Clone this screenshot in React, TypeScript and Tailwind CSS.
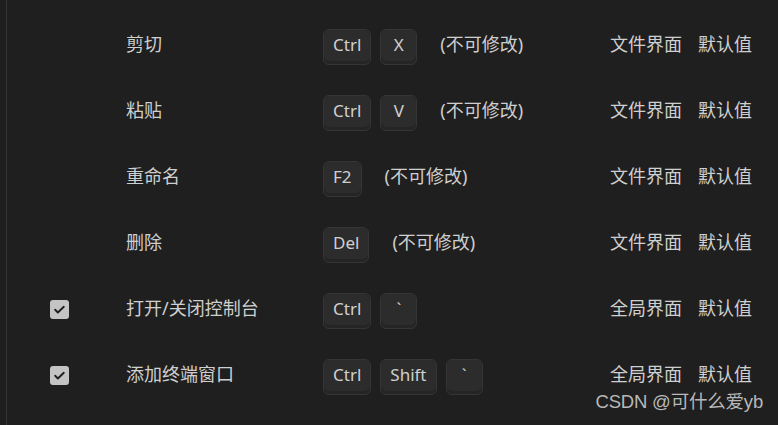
const rows = [
  { checked: false, label: "", keys: ["", ""], note: "", scope: "", value: "" },
  { checked: false, label: "剪切", keys: ["Ctrl", "X"], note: "(不可修改)", scope: "文件界面", value: "默认值" },
  { checked: false, label: "粘贴", keys: ["Ctrl", "V"], note: "(不可修改)", scope: "文件界面", value: "默认值" },
  { checked: false, label: "重命名", keys: ["F2"], note: "(不可修改)", scope: "文件界面", value: "默认值" },
  { checked: false, label: "删除", keys: ["Del"], note: "(不可修改)", scope: "文件界面", value: "默认值" },
  { checked: true, label: "打开/关闭控制台", keys: ["Ctrl", "`"], note: "", scope: "全局界面", value: "默认值" },
  { checked: true, label: "添加终端窗口", keys: ["Ctrl", "Shift", "`"], note: "", scope: "全局界面", value: "默认值" },
];

const Key = ({ k, w }: { k: string; w?: string }) => {
  return (
    <div className={`rounded-md border border-[#353535] bg-[#252525] pb-[3px] ${w ?? ""}`}>
      <div className="h-[31px] min-w-[35px] px-[9px] rounded-md bg-[#2c2c2c] flex items-center justify-center text-[17px] text-[#d0d0d0]">
        {k}
      </div>
    </div>
  );
};

const Check = () => (
  <div className="w-[19px] h-[19px] rounded-[3px] bg-[#c4c4c4] flex items-center justify-center">
    <svg width="13" height="13" viewBox="0 0 24 24" fill="none" stroke="#1f1f1f" strokeWidth="3.5" strokeLinecap="round" strokeLinejoin="round">
      <path d="M4 12.5l5 5L20 7" />
    </svg>
  </div>
);

export default function App() {
  return (
    <div
      className="relative w-[778px] h-[425px] overflow-hidden bg-[#1f1f1f] text-[#cfcfcf]"
      style={{ fontFamily: '"Noto Sans", "Noto Sans CJK SC", sans-serif' }}
    >
      <div className="ml-[6px] h-full border-l border-[#363636] flex flex-col">
        <div className="-mt-[54px]">
          {rows.map((r, i) => (
            <div key={i} className="h-[66px] flex items-center text-[18px]">
              <div className="w-[43px]" />
              <div className="w-[76px]">{r.checked && <Check />}</div>
              <div className="w-[197px] pb-[1px]">{r.label}</div>
              <div className="w-[287px] flex items-center">
                <div className="flex gap-[9px] pt-[3px]">
                  {r.keys.map((k, j) => (
                    <Key key={j} k={k} w={k === "" ? (j === 0 ? "w-[50px]" : "w-[37px]") : undefined} />
                  ))}
                </div>
                {r.note && <span className="ml-[23px] pb-[1px]">{r.note}</span>}
              </div>
              <div className="w-[88px] pb-[1px]">{r.scope}</div>
              <div className="pb-[1px]">{r.value}</div>
            </div>
          ))}
        </div>
      </div>
      <div
        className="absolute right-[15px] bottom-[9px] text-[18.5px] text-[#b8b8b8] tracking-[-0.2px]"
        style={{ fontFamily: '"Liberation Sans", "Noto Sans CJK SC", sans-serif' }}
      >
        CSDN @可什么爱yb
      </div>
    </div>
  );
}
